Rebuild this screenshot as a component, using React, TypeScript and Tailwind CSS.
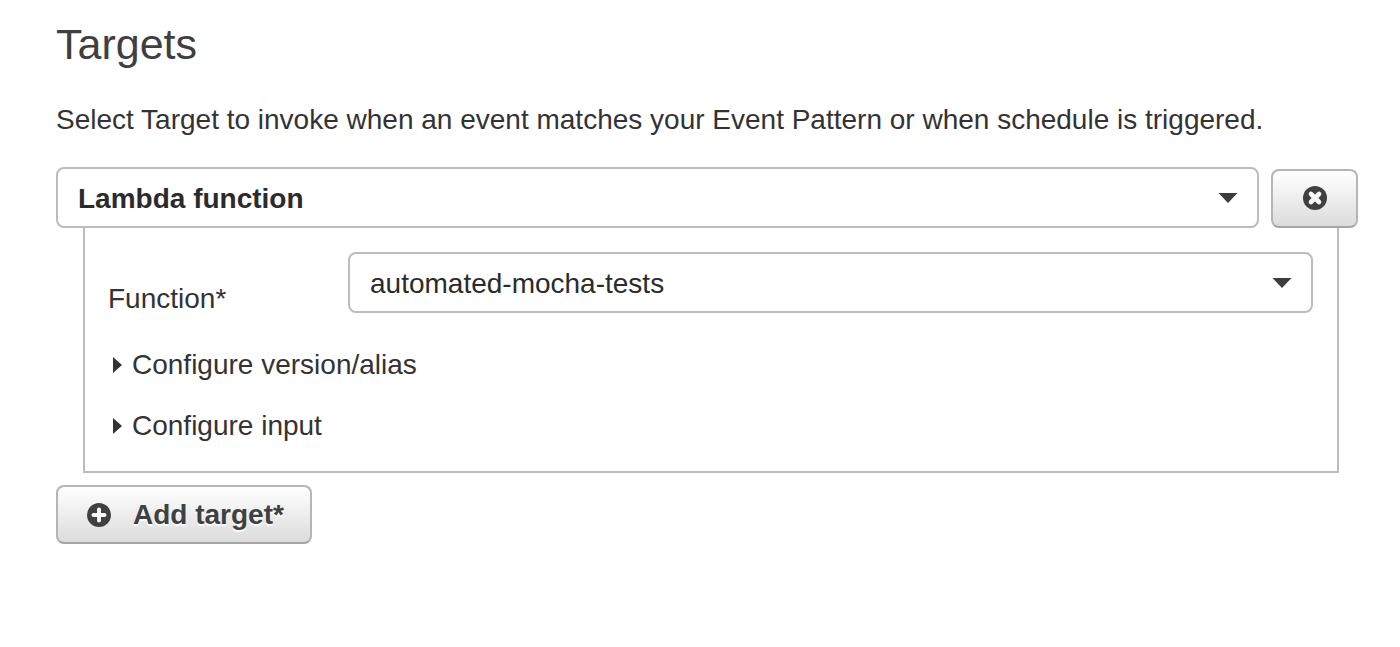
import { useState } from "react";

type SelectProps = {
  id: string;
  label?: string;
  options: string[];
  bold?: boolean;
};

function Select({ id, label, options, bold = false }: SelectProps) {
  const [value, setValue] = useState(options[0]);
  return (
    <div className="grid min-w-0 flex-1 items-center">
      <select
        id={id}
        aria-label={label}
        value={value}
        onChange={(e) => setValue(e.target.value)}
        className={`col-start-1 row-start-1 h-[61px] w-full appearance-none rounded-lg border-2 border-[#bcbcbc] bg-white pt-[2px] pr-14 pl-5 text-[#2b2b2b] ${
          bold ? "font-bold" : "font-normal"
        }`}
      >
        {options.map((option) => (
          <option key={option}>{option}</option>
        ))}
      </select>
      <svg
        viewBox="0 0 20 10"
        className="pointer-events-none col-start-1 row-start-1 mr-[21px] h-[10px] w-5 justify-self-end fill-[#3c3c3c]"
        aria-hidden="true"
      >
        <path d="M0.5 0h19L10 10z" />
      </svg>
    </div>
  );
}

function Disclosure({ title }: { title: string }) {
  const [open, setOpen] = useState(false);
  return (
    <button
      type="button"
      aria-expanded={open}
      onClick={() => setOpen(!open)}
      className="flex items-center gap-[10px] pl-[5px]"
    >
      <svg
        viewBox="0 0 9 16"
        className={`h-4 w-[9px] fill-[#333333] ${open ? "rotate-90" : ""}`}
        aria-hidden="true"
      >
        <path d="M0 0l9 8-9 8z" />
      </svg>
      {title}
    </button>
  );
}

const buttonStyle =
  "flex h-[59px] items-center justify-center rounded-lg border-2 border-[#b5b5b5] border-b-[#a5a5a5] bg-linear-to-b from-white to-[#dcdcdc]";

export default function App() {
  return (
    <main className="bg-white pt-[19px] pr-[42px] pb-[103px] pl-14 font-['Liberation_Sans',Arial,sans-serif] text-[28px] leading-8 text-[#333333]">
      <h1 className="text-[43px] leading-[50px] text-[#3f3f3f]">Targets</h1>
      <p className="mt-[35px]">
        Select Target to invoke when an event matches your Event Pattern or when
        schedule is triggered.
      </p>

      <section className="mt-[31px]">
        <div className="flex items-end gap-3">
          <Select
            id="target-type"
            label="Target type"
            options={["Lambda function"]}
            bold
          />
          <button
            type="button"
            aria-label="Remove target"
            className={`${buttonStyle} w-[87px] pb-[2px]`}
          >
            <svg viewBox="0 0 24 24" className="size-6" aria-hidden="true">
              <circle cx="12" cy="12" r="12" fill="#404040" />
              <path
                d="M8 8l8 8M16 8l-8 8"
                stroke="#f8f8f8"
                strokeWidth="4.6"
                strokeLinecap="round"
              />
            </svg>
          </button>
        </div>

        <div className="mr-[19px] ml-[27px] flex flex-col border-2 border-t-0 border-[#bcbcbc] pt-6 pr-6 pb-[29px] pl-[23px]">
          <div className="flex items-end">
            <label htmlFor="function-name" className="w-60 shrink-0 leading-7">
              Function*
            </label>
            <Select id="function-name" options={["automated-mocha-tests"]} />
          </div>
          <div className="mt-9 flex flex-col items-start gap-[29px]">
            <Disclosure title="Configure version/alias" />
            <Disclosure title="Configure input" />
          </div>
        </div>
      </section>

      <button
        type="button"
        className={`${buttonStyle} mt-3 gap-[22px] pr-[26px] pl-[29px] font-bold text-[#404040] text-shadow-[0_2px_1px_#ffffff]`}
      >
        <svg viewBox="0 0 24 24" className="size-6" aria-hidden="true">
          <circle cx="12" cy="12" r="12" fill="#404040" />
          <path
            d="M12 6.5v11M6.5 12h11"
            stroke="#f8f8f8"
            strokeWidth="4"
            strokeLinecap="round"
          />
        </svg>
        Add target*
      </button>
    </main>
  );
}
